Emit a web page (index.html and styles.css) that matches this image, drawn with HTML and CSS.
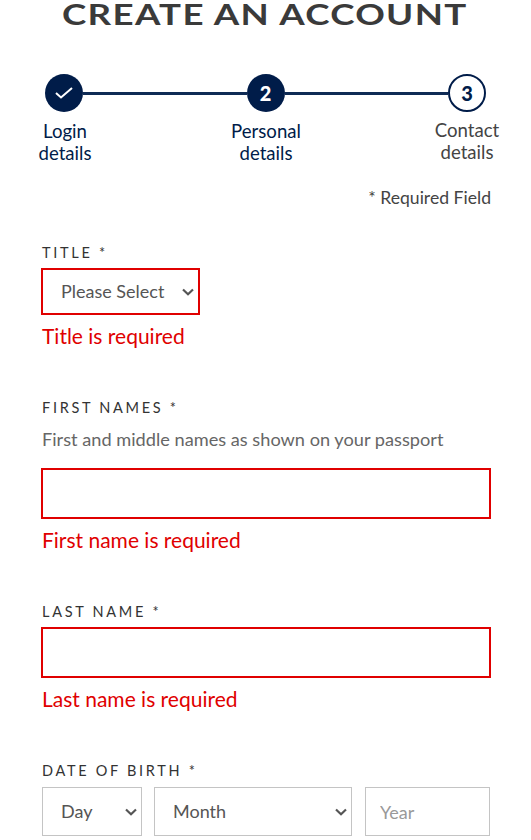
FILE: index.html
```html
<!DOCTYPE html>
<html lang="en">
<head>
    <meta charset="UTF-8">
    <meta name="viewport" content="width=device-width, initial-scale=1.0">
    <title>Create an account</title>
    <link rel="stylesheet" href="styles.css">
</head>
<body>
    <h1 class="page-title">CREATE AN ACCOUNT</h1>

    <div class="steps">
        <div class="step-track">
            <span class="step-dot">
                <svg width="18" height="12" viewBox="0 0 18 12"><path d="M1 6 L6 10.5 L17 1" fill="none" stroke="#fff" stroke-width="2"/></svg>
            </span>
            <span class="step-line"></span>
            <span class="step-dot">2</span>
            <span class="step-line"></span>
            <span class="step-dot step-dot-todo">3</span>
        </div>
        <div class="step-labels">
            <span class="step-label">Login<br>details</span>
            <span class="step-label">Personal<br>details</span>
            <span class="step-label step-label-todo">Contact<br>details</span>
        </div>
    </div>

    <p class="required-note">* Required Field</p>

    <form class="account-form">
        <div class="field">
            <label class="field-label">TITLE *</label>
            <select class="control control-error title-select">
                <option>Please Select</option>
            </select>
            <p class="field-error">Title is required</p>
        </div>

        <div class="field">
            <label class="field-label">FIRST NAMES *</label>
            <p class="field-hint">First and middle names as shown on your passport</p>
            <input class="control control-error" type="text">
            <p class="field-error">First name is required</p>
        </div>

        <div class="field">
            <label class="field-label">LAST NAME *</label>
            <input class="control control-error" type="text">
            <p class="field-error">Last name is required</p>
        </div>

        <div class="field">
            <label class="field-label">DATE OF BIRTH *</label>
            <div class="dob-row">
                <select class="control dob-day"><option>Day</option></select>
                <select class="control dob-month"><option>Month</option></select>
                <input class="control dob-year" type="text" placeholder="Year">
            </div>
        </div>
    </form>
</body>
</html>
```

FILE: styles.css
```css
html, body {
    height: 840px;
    overflow: hidden;
}

body {
    box-sizing: border-box;
    margin: 0;
    padding: 0 40px 0 41px;
    font-family: Lato, "Open Sans", sans-serif;
    background-color: #fff;
    color: #3a3a3a;
}

.page-title {
    width: fit-content;
    margin: 0 auto;
    height: 29px;
    line-height: 29px;
    font-size: 28px;
    font-weight: 700;
    letter-spacing: 1px;
    color: #3a3a3a;
    white-space: nowrap;
    transform: translateX(-1px) scaleX(1.31);
}

.steps {
    margin: 45px -27px 0;
}

.step-track {
    display: flex;
    align-items: center;
    padding: 0 32px 0 31px;
}

.step-dot {
    display: flex;
    align-items: center;
    justify-content: center;
    box-sizing: border-box;
    width: 38px;
    height: 38px;
    flex: none;
    border-radius: 50%;
    background-color: #001c49;
    color: #fff;
    font-size: 20px;
    font-weight: 900;
}

.step-dot-todo {
    background-color: #fff;
    border: 2px solid #001c49;
    color: #001c49;
}

.step-line {
    flex: 1;
    height: 3px;
    background-color: #0f2b55;
}

.step-labels {
    display: flex;
    justify-content: space-between;
    margin-top: 8px;
    padding-left: 1px;
}

.step-label {
    width: 100px;
    text-align: center;
    font-size: 18.6px;
    line-height: 22px;
    color: #001c49;
}

.step-label-todo {
    margin-top: -1px;
    margin-right: 1px;
    color: #444;
}

.required-note {
    margin: 23px 0 0;
    text-align: right;
    font-size: 17.6px;
    line-height: 22px;
    color: #444;
}

.account-form {
    margin-top: 34px;
}

.field {
    margin-bottom: 49px;
}

.field:last-child {
    margin-bottom: 0;
}

.field-label {
    display: block;
    margin: 1px 0 5px;
    padding-left: 1px;
    font-size: 14.5px;
    line-height: 20px;
    letter-spacing: 2.7px;
    color: #333;
}

.field-hint {
    margin: 10px 0 18px;
    padding-left: 1px;
    font-size: 18.2px;
    line-height: 22px;
    color: #666;
}

.control {
    display: block;
    box-sizing: border-box;
    width: 100%;
    height: 51px;
    margin: 0;
    padding: 0 14px;
    border: 1px solid #c4c4c4;
    border-radius: 0;
    background-color: #fff;
    font-family: Lato, "Open Sans", sans-serif;
    font-size: 18px;
    color: #555;
}

select.control {
    appearance: none;
    padding: 0 20px 2px 18px;
    background-image: url("data:image/svg+xml,%3Csvg xmlns='http://www.w3.org/2000/svg' width='12' height='8' viewBox='0 0 12 8'%3E%3Cpath d='M1 1.5 L6 6.2 L11 1.5' fill='none' stroke='%23555' stroke-width='2.2'/%3E%3C/svg%3E");
    background-repeat: no-repeat;
    background-position: right 4px center;
}

.control::placeholder {
    color: #999;
}

.control-error {
    border: 2px solid #e00000;
}

.title-select {
    width: 159px;
    height: 47px;
}

.field-error {
    margin: 8px 0 0;
    padding-left: 1px;
    font-size: 21px;
    line-height: 26px;
    color: #e00000;
}

.dob-row {
    display: flex;
    gap: 12px;
    padding-left: 1px;
    margin-top: 6px;
}

.dob-row .control {
    height: 49px;
    flex: none;
}

.dob-day {
    width: 100px;
}

.dob-month {
    width: 198px;
}

.dob-year {
    width: 125px;
    margin-left: 1px;
}
```
